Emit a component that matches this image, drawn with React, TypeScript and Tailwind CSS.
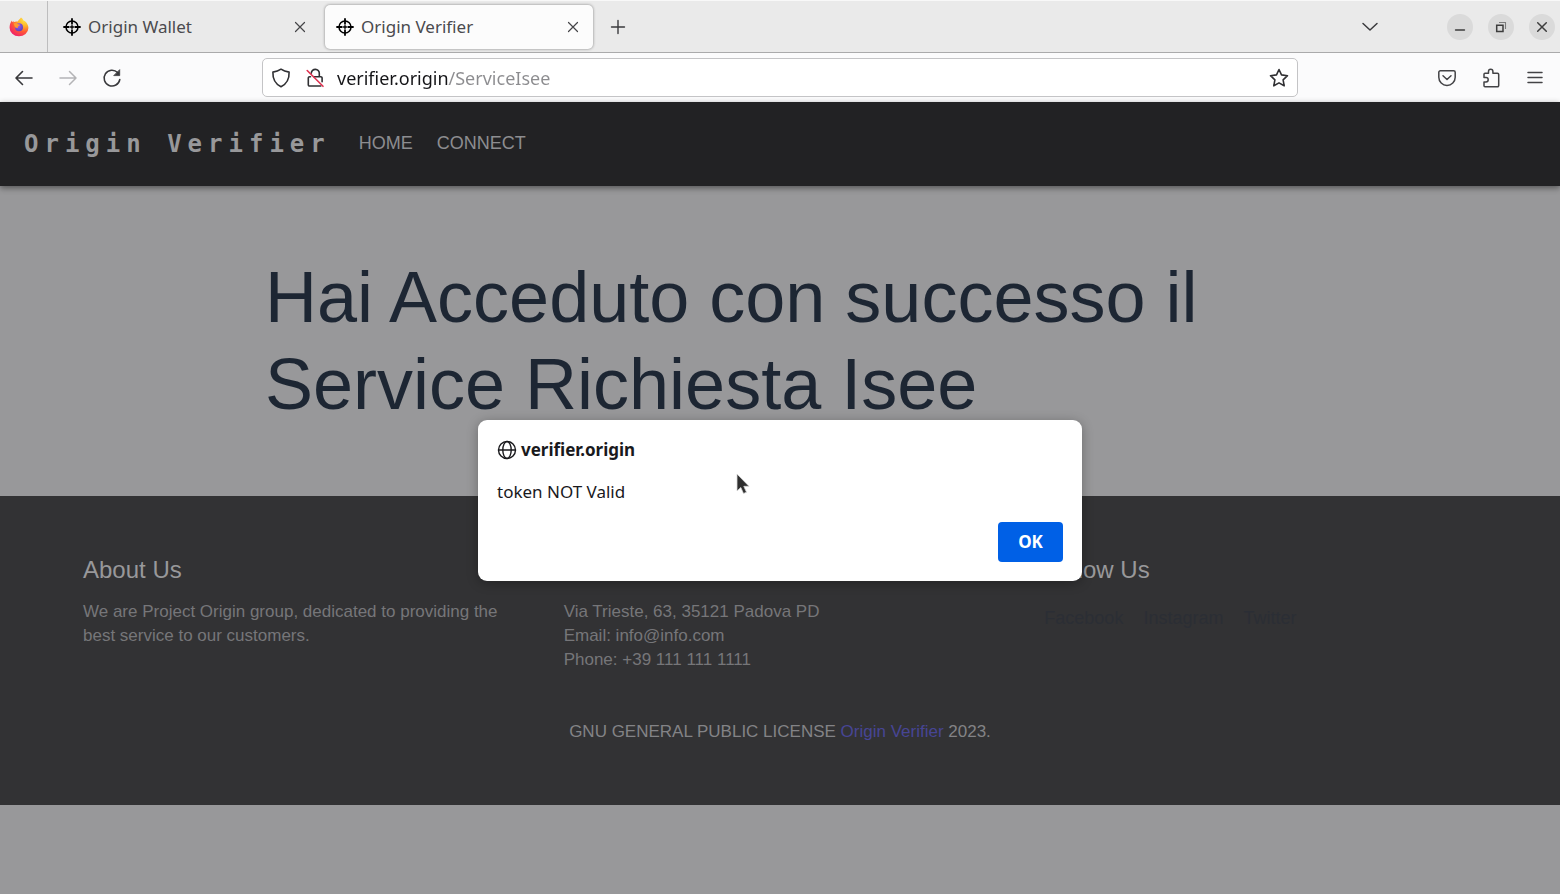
import React from "react";

type IconProps = { className?: string };

const strokeProps = {
  fill: "none",
  stroke: "currentColor",
  strokeLinecap: "round" as const,
  strokeLinejoin: "round" as const,
};

function FirefoxLogo() {
  return (
    <svg viewBox="0 0 20 20" className="size-5" aria-hidden="true">
      <defs>
        <radialGradient id="fx-flame" cx="0.8" cy="0.1" r="1">
          <stop offset="0" stopColor="#ffe94a" />
          <stop offset="0.35" stopColor="#ffb52a" />
          <stop offset="0.65" stopColor="#ff5a35" />
          <stop offset="1" stopColor="#f0206a" />
        </radialGradient>
        <radialGradient id="fx-globe" cx="0.4" cy="0.3" r="0.8">
          <stop offset="0" stopColor="#a05cf0" />
          <stop offset="1" stopColor="#5340b8" />
        </radialGradient>
      </defs>
      <path
        d="M12 .6c1.200.8 2 1.800 2.500 3 .9.3 2.300 1.200 3 2.200 1.100 1.500 1.900 3.200 1.900 5.200a9.400 8.400 0 0 1-18.800-.2c0-2.500.6-4.800 1.700-6.400l.6-.9.3 1.700 1.200-1.300.3 1.300c1.200-.7 2.700-.9 4-.6.9-1.400 2-2.300 3.300-4z"
        fill="url(#fx-flame)"
      />
      <circle cx="10" cy="10.200" r="4" fill="url(#fx-globe)" />
      <path d="M4.500 6.600c1.700-1 3.600-.6 4.500.6l2 .5c-.2 1-1.400 1.100-2 1.700-.5.800.3 1.400-.7 1.500-1.300.1-2.600-.8-2.800-2z" fill="#ff9a2e" />
    </svg>
  );
}

function Crosshair() {
  return (
    <svg viewBox="0 0 18 18" className="size-[18px] shrink-0 text-black" aria-hidden="true" {...strokeProps}>
      <circle cx="9" cy="9" r="6" strokeWidth="1.500" />
      <path d="M9 1v4.800M9 12.200V17M1 9h4.800M12.200 9H17" strokeWidth="1.800" />
      <path d="M9 7.500v3M7.500 9h3" strokeWidth="1.300" />
    </svg>
  );
}

function CloseIcon({ className }: IconProps) {
  return (
    <svg viewBox="0 0 12 12" className={className} aria-hidden="true" {...strokeProps}>
      <path d="M1.500 1.500l9 9M10.500 1.500l-9 9" strokeWidth="1.200" />
    </svg>
  );
}

function Tab({ title, active, className }: { title: string; active?: boolean; className: string }) {
  return (
    <div
      className={
        "flex h-11 items-center rounded-[5px] pl-[11px] pr-3 " +
        (active ? "bg-[#fcfcfc] shadow-[0_0_3px_rgba(0,0,0,0.45)] " : "") +
        className
      }
    >
      <button type="button" className="flex flex-1 items-center gap-[7px] text-left text-[17px] leading-6 text-[#4a4a4e]">
        <Crosshair />
        {title}
      </button>
      <button type="button" aria-label={"Close " + title} className="flex size-4 items-center justify-center text-[#454548]">
        <CloseIcon className="size-3" />
      </button>
    </div>
  );
}

function TabStrip() {
  return (
    <div className="flex h-[53px] items-center border-b border-t border-b-[#aaaaab] border-t-[#f8f8f8] bg-[#eaeaea] pr-[5px]">
      <div className="flex h-full w-12 items-center border-r border-[#bdbdbe] pl-[9px]">
        <FirefoxLogo />
      </div>
      <Tab title="Origin Wallet" className="ml-1 w-[268px]" />
      <Tab title="Origin Verifier" active className="ml-[5px] w-[268px]" />
      <button type="button" aria-label="New tab" className="ml-[15px] flex size-5 items-center justify-center text-[#3a3a3d]">
        <svg viewBox="0 0 16 16" className="size-4" {...strokeProps}>
          <path d="M8 1.500v13M1.500 8h13" strokeWidth="1.400" />
        </svg>
      </button>
      <div className="flex-1" />
      <button type="button" aria-label="List all tabs" className="mr-[67px] flex size-5 items-center justify-center text-[#3a3a3d]">
        <svg viewBox="0 0 18 10" className="h-[10px] w-[18px]" {...strokeProps}>
          <path d="M2 1.500l7 6.500 7-6.500" strokeWidth="1.500" />
        </svg>
      </button>
      <div className="flex gap-[15px] text-[#3d3d3d]">
        <button type="button" aria-label="Minimize" className="flex size-[26px] items-center justify-center rounded-full bg-[#dadada]">
          <svg viewBox="0 0 12 12" className="size-3" {...strokeProps}>
            <path d="M1.500 9h9" strokeWidth="1.400" />
          </svg>
        </button>
        <button type="button" aria-label="Restore" className="flex size-[26px] items-center justify-center rounded-full bg-[#dadada]">
          <svg viewBox="0 0 12 12" className="size-3" fill="none" stroke="currentColor">
            <path d="M1.700 4.200h6.300v6.300H1.700z" strokeWidth="1.500" />
            <path d="M4 1.500h6.500V8" strokeWidth="1.100" opacity="0.6" />
          </svg>
        </button>
        <button type="button" aria-label="Close window" className="flex size-[26px] items-center justify-center rounded-full bg-[#dadada]">
          <svg viewBox="0 0 12 12" className="size-3" {...strokeProps}>
            <path d="M1.700 1.700l8.600 8.600M10.300 1.700l-8.600 8.600" strokeWidth="1.500" />
          </svg>
        </button>
      </div>
    </div>
  );
}

function Toolbar() {
  return (
    <div className="flex h-[49px] items-center bg-[#fbfbfc]">
      <div className="flex w-[262px] items-center gap-6 pl-[14px] text-[#38383b]">
        <button type="button" aria-label="Back" className="flex size-5 items-center justify-center">
          <svg viewBox="0 0 20 20" className="size-5" {...strokeProps}>
            <path d="M18 10H2.500M8.500 3.500L2 10l6.500 6.500" strokeWidth="1.600" />
          </svg>
        </button>
        <button type="button" aria-label="Forward" disabled className="flex size-5 items-center justify-center text-[#b4b4b6]">
          <svg viewBox="0 0 20 20" className="size-5" {...strokeProps}>
            <path d="M2 10h15.500M11.500 3.500L18 10l-6.500 6.500" strokeWidth="1.500" />
          </svg>
        </button>
        <button type="button" aria-label="Reload" className="flex size-5 items-center justify-center">
          <svg viewBox="0 0 20 20" className="size-5" {...strokeProps}>
            <path d="M17.800 11.500A7.900 7.900 0 1 1 15.600 4.500" strokeWidth="1.500" />
            <path d="M17.700 2v5.600h-5.600z" fill="currentColor" strokeWidth="0.800" />
          </svg>
        </button>
      </div>
      <div className="flex h-[39px] flex-1 items-center rounded-[5px] border border-[#c4c4c6] bg-white pl-2 pr-2 text-[#303033]">
        <svg viewBox="0 0 20 20" className="size-5" aria-hidden="true" {...strokeProps}>
          <path d="M10 1.200c2.600 1.800 5 2.500 8.100 2.900.3 6.700-1.900 11.500-8.100 14.700C3.800 15.600 1.600 10.800 1.900 4.100 5 3.700 7.400 3 10 1.200z" strokeWidth="1.600" />
        </svg>
        <svg viewBox="0 0 20 20" className="ml-3.5 size-5" aria-hidden="true" {...strokeProps}>
          <path d="M6.300 5.200a4 4 0 0 1 8 .3v3.200h1.500a1.300 1.300 0 0 1 1.300 1.300v3.800M5.500 8.700H4.600A1.300 1.300 0 0 0 3.300 10v6.700A1.300 1.300 0 0 0 4.600 18h11.200M9 8.700h5" strokeWidth="1.600" />
          <path d="M2.200 2.500L18 18.300" stroke="#e0304f" strokeWidth="1.600" />
        </svg>
        <input
          type="text"
          aria-label="Address"
          defaultValue="verifier.origin/ServiceIsee"
          className="ml-3 min-w-0 flex-1 bg-[linear-gradient(90deg,#151518_112px,#8c8c8f_112px)] bg-clip-text text-[18px] leading-6 text-transparent outline-none"
        />
        <button type="button" aria-label="Bookmark this page" className="flex size-5 items-center justify-center">
          <svg viewBox="0 0 20 20" className="size-5" {...strokeProps}>
            <path d="M10 1.500l2.500 5.400 6 .8-4.400 4.100 1.100 6-5.200-2.900-5.200 2.900 1.100-6L1.500 7.700l6-.8z" strokeWidth="1.600" />
          </svg>
        </button>
      </div>
      <div className="flex w-[262px] items-center justify-end gap-6 pr-[15px] text-[#434346]">
        <button type="button" aria-label="Save to Pocket" className="flex size-5 items-center justify-center">
          <svg viewBox="0 0 20 20" className="size-5" {...strokeProps}>
            <path d="M3.400 2.700h13.200a1.600 1.600 0 0 1 1.600 1.600v4.900a8.200 8.200 0 0 1-16.400 0V4.300a1.600 1.600 0 0 1 1.600-1.600z" strokeWidth="1.500" />
            <path d="M6 7.800l4 3.700 4-3.700" strokeWidth="1.500" />
          </svg>
        </button>
        <button type="button" aria-label="Extensions" className="flex size-5 items-center justify-center">
          <svg viewBox="0 0 20 20" className="size-5" {...strokeProps}>
            <path d="M3 8V6.300a1 1 0 0 1 1-1h3.500V3.500a2.200 2.200 0 0 1 4.400 0v1.800h4.600a1.200 1.200 0 0 1 1.200 1.200v11a1.200 1.200 0 0 1-1.200 1.200H4a1 1 0 0 1-1-1V14h2a2.200 2.200 0 0 0 0-4.400H3z" strokeWidth="1.500" />
          </svg>
        </button>
        <button type="button" aria-label="Open menu" className="flex size-5 items-center justify-center">
          <svg viewBox="0 0 20 20" className="size-5" {...strokeProps}>
            <path d="M3 4.500h14M3 9.500h14M3 14.500h14" strokeWidth="1.500" />
          </svg>
        </button>
      </div>
    </div>
  );
}

function AlertDialog() {
  return (
    <div className="absolute inset-x-0 top-[318px] flex justify-center font-['Noto_Sans',sans-serif] text-[17px] leading-6 text-[#19191c]">
      <div role="alertdialog" aria-labelledby="alert-title" aria-describedby="alert-text" className="w-[604px] rounded-[9px] bg-white px-[19px] pb-[19px] pt-[18px] shadow-[0_2px_12px_rgba(0,0,0,0.3)]">
        <h2 id="alert-title" className="flex items-center gap-1 font-bold">
          <svg viewBox="0 0 20 20" className="size-5" aria-hidden="true" {...strokeProps}>
            <circle cx="10" cy="10" r="8.500" strokeWidth="1.400" />
            <ellipse cx="10" cy="10" rx="4.200" ry="8.500" strokeWidth="1.400" />
            <path d="M1.500 10h17" strokeWidth="1.400" />
          </svg>
          verifier.origin
        </h2>
        <p id="alert-text" className="mt-[18px]">token NOT Valid</p>
        <div className="mt-[18px] flex justify-end">
          <button type="button" className="h-10 w-[65px] rounded-[4px] bg-[#0060e6] font-bold text-white">OK</button>
        </div>
      </div>
    </div>
  );
}

function Cursor() {
  return (
    <svg viewBox="0 0 14 22" className="pointer-events-none absolute left-[736px] top-[371px] h-[22px] w-[14px]" aria-hidden="true">
      <path d="M1 1v17l3.800-3.500 2.700 6 3-1.300-2.700-5.900H13z" fill="#2e2e2e" stroke="#d8d8d8" strokeWidth="0.800" />
    </svg>
  );
}

function FooterHeading({ children }: { children: React.ReactNode }) {
  return <h2 className="mb-[15px] text-[24px] leading-[30px] text-[#98989a]">{children}</h2>;
}

export default function App() {
  return (
    <div className="flex min-h-screen flex-col bg-[#98989a]">
      <header className="font-['Noto_Sans',sans-serif]">
        <TabStrip />
        <Toolbar />
      </header>
      <div className="relative flex-1 font-['Liberation_Sans',sans-serif]">
        <nav className="relative flex h-[84px] items-center bg-[#222224] px-6 shadow-[0_2px_6px_rgba(0,0,0,0.45)]">
          <a href="#" className="font-['DejaVu_Sans_Mono',monospace] text-[24px] font-bold leading-8 tracking-[6px] text-[#98989a]">Origin Verifier</a>
          <div className="ml-7 flex gap-6 pb-[3px] text-[18px] leading-6 text-[#8d8d90]">
            <a href="#home">HOME</a>
            <a href="#connect">CONNECT</a>
          </div>
        </nav>
        <main className="px-[265px] py-[68px]">
          <h1 className="text-[72px] leading-[87px] text-[#1d2633]">Hai Acceduto con successo il Service Richiesta Isee</h1>
        </main>
        <footer className="bg-[#323234] px-[59px] pb-[61px] pt-[59px] text-[17px] leading-6 text-[#767679]">
          <div className="grid grid-cols-3">
            <section className="px-6">
              <FooterHeading>About Us</FooterHeading>
              <p>We are Project Origin group, dedicated to providing the best service to our customers.</p>
            </section>
            <section className="px-6">
              <FooterHeading>Contact Us</FooterHeading>
              <p>Via Trieste, 63, 35121 Padova PD</p>
              <p>Email: info@info.com</p>
              <p>Phone: +39 111 111 1111</p>
            </section>
            <section className="px-6">
              <FooterHeading>Follow Us</FooterHeading>
              <div className="flex gap-5 pt-1.5 text-[18px] text-[#2b2e35]">
                <a href="#facebook">Facebook</a>
                <a href="#instagram">Instagram</a>
                <a href="#twitter">Twitter</a>
              </div>
            </section>
          </div>
          <p className="mt-12 text-center text-[#838386]">
            GNU GENERAL PUBLIC LICENSE <a href="#license" className="text-[#474594]">Origin Verifier</a> 2023.
          </p>
        </footer>
        <AlertDialog />
        <Cursor />
      </div>
    </div>
  );
}
